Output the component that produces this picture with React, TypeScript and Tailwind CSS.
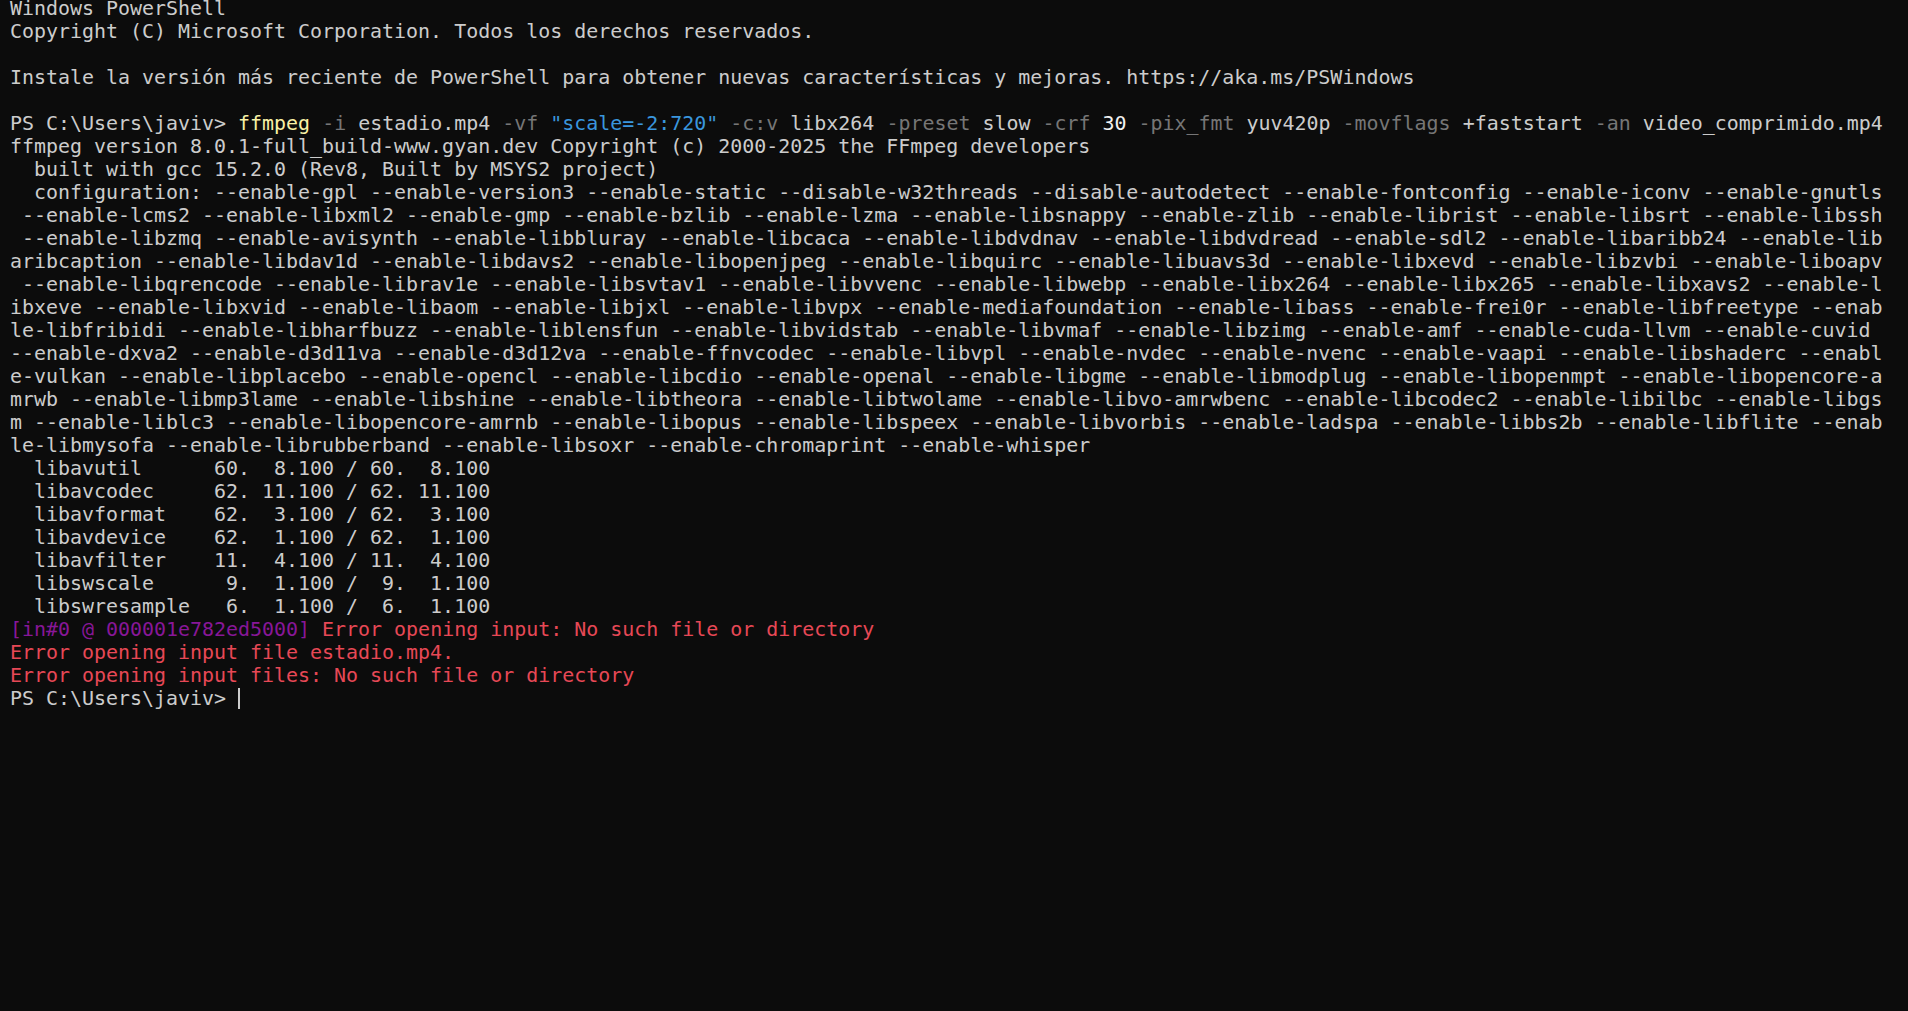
import React from 'react';

const FG = 'text-[#cccccc]';

const config = [
  '  configuration: --enable-gpl --enable-version3 --enable-static --disable-w32threads --disable-autodetect --enable-fontconfig --enable-iconv --enable-gnutls',
  ' --enable-lcms2 --enable-libxml2 --enable-gmp --enable-bzlib --enable-lzma --enable-libsnappy --enable-zlib --enable-librist --enable-libsrt --enable-libssh',
  ' --enable-libzmq --enable-avisynth --enable-libbluray --enable-libcaca --enable-libdvdnav --enable-libdvdread --enable-sdl2 --enable-libaribb24 --enable-lib',
  'aribcaption --enable-libdav1d --enable-libdavs2 --enable-libopenjpeg --enable-libquirc --enable-libuavs3d --enable-libxevd --enable-libzvbi --enable-liboapv',
  ' --enable-libqrencode --enable-librav1e --enable-libsvtav1 --enable-libvvenc --enable-libwebp --enable-libx264 --enable-libx265 --enable-libxavs2 --enable-l',
  'ibxeve --enable-libxvid --enable-libaom --enable-libjxl --enable-libvpx --enable-mediafoundation --enable-libass --enable-frei0r --enable-libfreetype --enab',
  'le-libfribidi --enable-libharfbuzz --enable-liblensfun --enable-libvidstab --enable-libvmaf --enable-libzimg --enable-amf --enable-cuda-llvm --enable-cuvid',
  '--enable-dxva2 --enable-d3d11va --enable-d3d12va --enable-ffnvcodec --enable-libvpl --enable-nvdec --enable-nvenc --enable-vaapi --enable-libshaderc --enabl',
  'e-vulkan --enable-libplacebo --enable-opencl --enable-libcdio --enable-openal --enable-libgme --enable-libmodplug --enable-libopenmpt --enable-libopencore-a',
  'mrwb --enable-libmp3lame --enable-libshine --enable-libtheora --enable-libtwolame --enable-libvo-amrwbenc --enable-libcodec2 --enable-libilbc --enable-libgs',
  'm --enable-liblc3 --enable-libopencore-amrnb --enable-libopus --enable-libspeex --enable-libvorbis --enable-ladspa --enable-libbs2b --enable-libflite --enab',
  'le-libmysofa --enable-librubberband --enable-libsoxr --enable-chromaprint --enable-whisper',
];

const libs = [
  '  libavutil      60.  8.100 / 60.  8.100',
  '  libavcodec     62. 11.100 / 62. 11.100',
  '  libavformat    62.  3.100 / 62.  3.100',
  '  libavdevice    62.  1.100 / 62.  1.100',
  '  libavfilter    11.  4.100 / 11.  4.100',
  '  libswscale      9.  1.100 /  9.  1.100',
  '  libswresample   6.  1.100 /  6.  1.100',
];

function Line({ children }: { children?: React.ReactNode }) {
  return <div className="h-[23px] leading-[23px] whitespace-pre">{children}</div>;
}

export default function App() {
  return (
    <div
      className={`min-h-screen w-full bg-[#0c0c0c] ${FG} text-[19.95px] pl-[10px] overflow-hidden`}
      style={{ fontFamily: '"DejaVu Sans Mono", "Liberation Mono", monospace' }}
    >
      {/* first row is a bit cut by the scrolled buffer */}
      <div className="h-[20px] leading-[17px] whitespace-pre">Windows PowerShell</div>
      <Line>Copyright (C) Microsoft Corporation. Todos los derechos reservados.</Line>
      <Line />
      <Line>Instale la versión más reciente de PowerShell para obtener nuevas características y mejoras. https://aka.ms/PSWindows</Line>
      <Line />
      <Line>
        PS C:\Users\javiv&gt; <span className="text-[#f9f1a5]">ffmpeg</span>{' '}
        <span className="text-[#767676]">-i</span> estadio.mp4{' '}
        <span className="text-[#767676]">-vf</span>{' '}
        <span className="text-[#3a96dd]">"scale=-2:720"</span>{' '}
        <span className="text-[#767676]">-c:v</span> libx264{' '}
        <span className="text-[#767676]">-preset</span> slow{' '}
        <span className="text-[#767676]">-crf</span>{' '}
        <span className="text-[#f2f2f2]">30</span>{' '}
        <span className="text-[#767676]">-pix_fmt</span> yuv420p{' '}
        <span className="text-[#767676]">-movflags</span> +faststart{' '}
        <span className="text-[#767676]">-an</span> video_comprimido.mp4
      </Line>
      <Line>ffmpeg version 8.0.1-full_build-www.gyan.dev Copyright (c) 2000-2025 the FFmpeg developers</Line>
      <Line>  built with gcc 15.2.0 (Rev8, Built by MSYS2 project)</Line>
      {config.map((c, i) => (
        <Line key={i}>{c}</Line>
      ))}
      {libs.map((l, i) => (
        <Line key={i}>{l}</Line>
      ))}
      <Line>
        <span className="text-[#881798]">[in#0 @ 000001e782ed5000]</span>
        <span className="text-[#e74856]"> Error opening input: No such file or directory</span>
      </Line>
      <Line>
        <span className="text-[#e74856]">Error opening input file estadio.mp4.</span>
      </Line>
      <Line>
        <span className="text-[#e74856]">Error opening input files: No such file or directory</span>
      </Line>
      <Line>
        <span className="inline-flex items-center h-[23px]">
          PS C:\Users\javiv&gt; <span className="inline-block w-[2px] h-[21px] bg-[#cccccc]" />
        </span>
      </Line>
    </div>
  );
}
